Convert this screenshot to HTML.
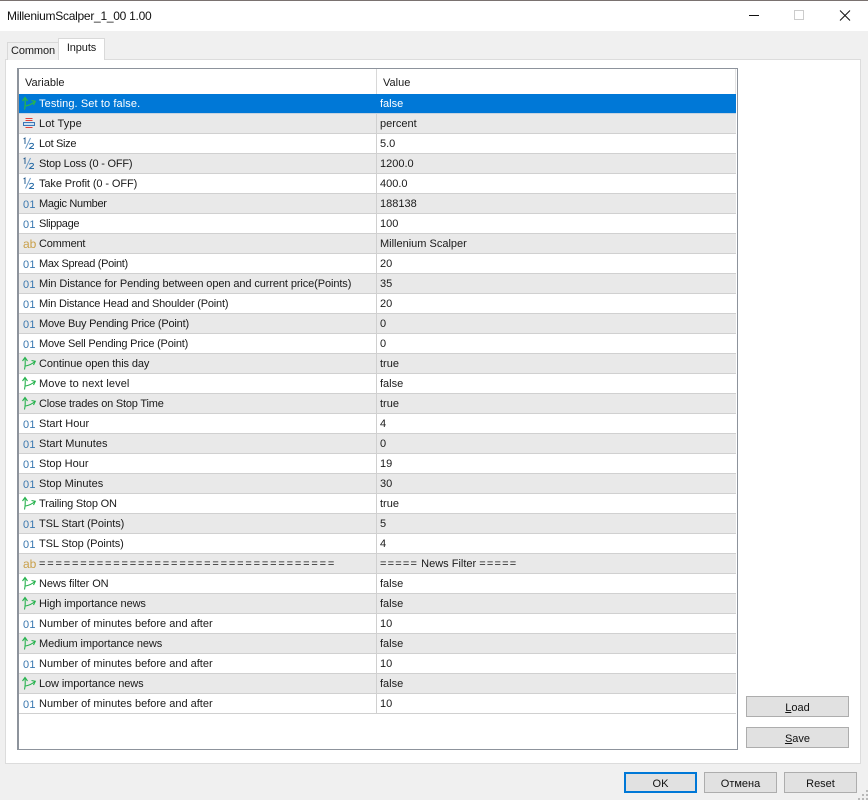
<!DOCTYPE html>
<html><head><meta charset="utf-8"><title>MilleniumScalper_1_00 1.00</title>
<style>
html,body{margin:0;padding:0;width:868px;height:800px;overflow:hidden;background:#f0f0f0}
body{font-family:"Liberation Sans",sans-serif;font-size:11px;color:#1a1a1a;position:relative}
.a{position:absolute;box-sizing:border-box}
#tb{left:0;top:0;width:868px;height:31px;background:#fff;border-top:1px solid #7a7270}
#title{left:7px;top:9px;font-size:12px;line-height:15px;color:#111;white-space:nowrap;letter-spacing:-.27px}
#panel{left:5px;top:59px;width:856px;height:705px;background:#fff;border:1px solid #dcdcdc}
.tab{text-align:center;font-size:11px;letter-spacing:-.1px}
#t1{left:7px;top:42px;width:52px;height:18px;background:#f0f0f0;border:1px solid #d9d9d9;border-bottom:0;line-height:17px}
#t2{left:58px;top:38px;width:47px;height:22px;background:#fff;border:1px solid #d9d9d9;border-bottom:0;line-height:19px}
#list{left:17px;top:68px;width:721px;height:682px;background:#fff;border:1px solid #8d939c;border-left-width:2px}
#hd{position:absolute;left:0;top:0;width:717px;height:25px;line-height:28px;border-right:1px solid #e4e4e4;box-sizing:border-box}
#hd span{position:absolute;top:0}
#hd i{position:absolute;left:357px;top:0;width:1px;height:25px;background:#d8d8d8}
#rows{position:absolute;left:0;top:25px;width:717px}
.r{position:relative;height:20px;box-sizing:border-box;border-bottom:1px solid #d0d0d0;line-height:21px;white-space:nowrap}
.r:nth-child(even){background:#e9e9e9}
.r.s{background:#0078d7;color:#fff;border-bottom-color:#c5d3e0}
.r .v{position:absolute;left:20px;top:0}
.r .w{position:absolute;left:357px;top:0;height:19px;padding-left:3px;border-left:1px solid #d0d0d0}
.r.s .w{border-left-color:#0078d7}
.r svg{position:absolute;left:3px;top:2px;width:15px;height:16px}
.n{position:absolute;left:4px;top:1px;color:#3a78b0;font-size:11px;letter-spacing:.3px}
.ab{position:absolute;left:4px;top:0;color:#c9a04a;font-size:12px}
.l1{letter-spacing:-.1px}.l2{letter-spacing:-.2px}.l3{letter-spacing:-.33px}.p{letter-spacing:.1px}
.q{letter-spacing:1.83px}.q2{letter-spacing:1.2px}
.btn{background:#e1e1e1;border:1px solid #adadad;text-align:center;font-size:11px;color:#111;line-height:22px}
.ok{border:2px solid #0078d7;line-height:20px}
</style></head><body>
<svg width="0" height="0" style="position:absolute"><defs>
<g id="b" fill="none" stroke="#27b34e" stroke-width="1.1"><path d="M2.500 13.500C3.300 10 3.400 6 3 2"/><path d="M.5 5L3 1.500L5.500 5"/><path d="M3.500 10C6.500 9.500 10 8 13 5.500"/><path d="M9.500 4.500L13.300 5.300L11.500 9"/></g>
<g id="b2" fill="none" stroke="#27b34e" stroke-width="1.3"><path d="M2.500 13.500C3.300 10 3.400 6 3 2"/><path d="M.5 5L3 1.500L5.500 5"/><path d="M3.500 10C6.500 9.500 10 8 13 5.500"/><path d="M9.500 4.500L13.300 5.300L11.500 9"/></g>
<g id="e" fill="none"><path d="M3.500 2.500H10.500M3.500 4.500H10.500M3.500 11.500H10.500" stroke="#e0403a"/><path d="M1.500 6.500H12.500V9.500H1.500Z" stroke="#3a78b8" fill="#cfe0f0"/></g>
<g id="f" fill="none" stroke-width="1"><path d="M1.500 3L3 2V8" stroke="#2a5f90"/><path d="M8.500 2L3.500 12.500" stroke="#6d9cc8"/><path d="M7.500 8.500C8 7 11.500 7 11.500 8.800C11.500 10 8.500 11 7.500 12.500H12" stroke="#2d6fa8"/></g>
</defs></svg>
<div class="a" id="tb"></div>
<div class="a" id="title">MilleniumScalper_1_00 1.00</div>
<svg class="a" style="left:740px;top:4px;width:120px;height:24px" fill="none">
<path d="M9 11.500H19" stroke="#111"/><path d="M54.500 6.500H63.500V15.500H54.500Z" stroke="#ccc"/><path d="M100 6.500L110 16.500M110 6.500L100 16.500" stroke="#111"/></svg>
<div class="a" id="panel"></div>
<div class="a tab" id="t1">Common</div>
<div class="a tab" id="t2">Inputs</div>
<div class="a" id="list">
<div id="hd"><span style="left:6px">Variable</span><span style="left:364px">Value</span><i></i></div>
<div id="rows">
<div class="r s"><svg><use href="#b2"/></svg><span class="v p">Testing. Set to false.</span><span class="w">false</span></div>
<div class="r"><svg><use href="#e"/></svg><span class="v p">Lot Type</span><span class="w">percent</span></div>
<div class="r"><svg><use href="#f"/></svg><span class="v l3">Lot Size</span><span class="w">5.0</span></div>
<div class="r"><svg><use href="#f"/></svg><span class="v l2">Stop Loss (0 - OFF)</span><span class="w">1200.0</span></div>
<div class="r"><svg><use href="#f"/></svg><span class="v l1">Take Profit (0 - OFF)</span><span class="w">400.0</span></div>
<div class="r"><span class="n">01</span><span class="v l3">Magic Number</span><span class="w">188138</span></div>
<div class="r"><span class="n">01</span><span class="v l3">Slippage</span><span class="w">100</span></div>
<div class="r"><span class="ab">ab</span><span class="v l2">Comment</span><span class="w">Millenium Scalper</span></div>
<div class="r"><span class="n">01</span><span class="v l3">Max Spread (Point)</span><span class="w">20</span></div>
<div class="r"><span class="n">01</span><span class="v l1">Min Distance for Pending between open and current price(Points)</span><span class="w">35</span></div>
<div class="r"><span class="n">01</span><span class="v l2">Min Distance Head and Shoulder (Point)</span><span class="w">20</span></div>
<div class="r"><span class="n">01</span><span class="v l2">Move Buy Pending Price (Point)</span><span class="w">0</span></div>
<div class="r"><span class="n">01</span><span class="v l2">Move Sell Pending Price (Point)</span><span class="w">0</span></div>
<div class="r"><svg><use href="#b"/></svg><span class="v l1">Continue open this day</span><span class="w">true</span></div>
<div class="r"><svg><use href="#b"/></svg><span class="v p">Move to next level</span><span class="w">false</span></div>
<div class="r"><svg><use href="#b"/></svg><span class="v l2">Close trades on Stop Time</span><span class="w">true</span></div>
<div class="r"><span class="n">01</span><span class="v">Start Hour</span><span class="w">4</span></div>
<div class="r"><span class="n">01</span><span class="v">Start Munutes</span><span class="w">0</span></div>
<div class="r"><span class="n">01</span><span class="v">Stop Hour</span><span class="w">19</span></div>
<div class="r"><span class="n">01</span><span class="v">Stop Minutes</span><span class="w">30</span></div>
<div class="r"><svg><use href="#b"/></svg><span class="v l2">Trailing Stop ON</span><span class="w">true</span></div>
<div class="r"><span class="n">01</span><span class="v l1">TSL Start (Points)</span><span class="w">5</span></div>
<div class="r"><span class="n">01</span><span class="v l1">TSL Stop (Points)</span><span class="w">4</span></div>
<div class="r"><span class="ab">ab</span><span class="v q">====================================</span><span class="w"><span class="q2">=====</span> News Filter <span class="q2">=====</span></span></div>
<div class="r"><svg><use href="#b"/></svg><span class="v l1">News filter ON</span><span class="w">false</span></div>
<div class="r"><svg><use href="#b"/></svg><span class="v l1">High importance news</span><span class="w">false</span></div>
<div class="r"><span class="n">01</span><span class="v">Number of minutes before and after</span><span class="w">10</span></div>
<div class="r"><svg><use href="#b"/></svg><span class="v l1">Medium importance news</span><span class="w">false</span></div>
<div class="r"><span class="n">01</span><span class="v">Number of minutes before and after</span><span class="w">10</span></div>
<div class="r"><svg><use href="#b"/></svg><span class="v l1">Low importance news</span><span class="w">false</span></div>
<div class="r"><span class="n">01</span><span class="v">Number of minutes before and after</span><span class="w">10</span></div>
</div></div>
<div class="a btn" style="left:746px;top:696px;width:103px;height:21px"><u>L</u>oad</div>
<div class="a btn" style="left:746px;top:727px;width:103px;height:21px"><u>S</u>ave</div>
<div class="a btn ok" style="left:624px;top:772px;width:73px;height:21px">OK</div>
<div class="a btn" style="left:704px;top:772px;width:73px;height:21px">Отмена</div>
<div class="a btn" style="left:784px;top:772px;width:73px;height:21px">Reset</div>
<svg class="a" style="left:858px;top:790px;width:10px;height:10px" fill="#b8b8b8"><rect x="8" y="0" width="2" height="2"/><rect x="4" y="4" width="2" height="2"/><rect x="8" y="4" width="2" height="2"/><rect x="0" y="8" width="2" height="2"/><rect x="4" y="8" width="2" height="2"/><rect x="8" y="8" width="2" height="2"/></svg>
</body></html>
